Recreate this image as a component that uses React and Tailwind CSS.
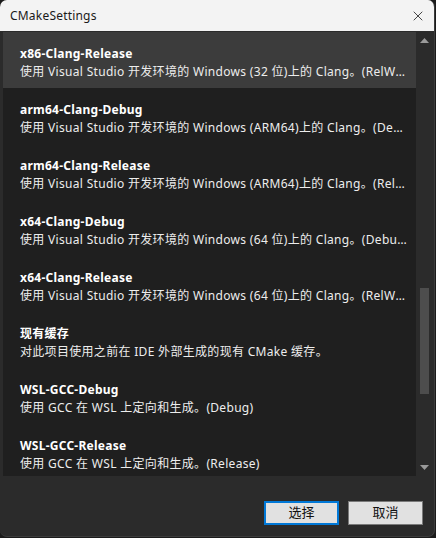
import { X } from "lucide-react";

const configs = [
  {
    name: "x86-Clang-Release",
    desc: "使用 Visual Studio 开发环境的 Windows (32 位)上的 Clang。(RelWithDebInfo)",
  },
  {
    name: "arm64-Clang-Debug",
    desc: "使用 Visual Studio 开发环境的 Windows (ARM64)上的 Clang。(Debug)",
  },
  {
    name: "arm64-Clang-Release",
    desc: "使用 Visual Studio 开发环境的 Windows (ARM64)上的 Clang。(RelWithDebInfo)",
  },
  {
    name: "x64-Clang-Debug",
    desc: "使用 Visual Studio 开发环境的 Windows (64 位)上的 Clang。(Debug)",
  },
  {
    name: "x64-Clang-Release",
    desc: "使用 Visual Studio 开发环境的 Windows (64 位)上的 Clang。(RelWithDebInfo)",
  },
  {
    name: "现有缓存",
    desc: "对此项目使用之前在 IDE 外部生成的现有 CMake 缓存。",
  },
  { name: "WSL-GCC-Debug", desc: "使用 GCC 在 WSL 上定向和生成。(Debug)" },
  { name: "WSL-GCC-Release", desc: "使用 GCC 在 WSL 上定向和生成。(Release)" },
];

const font = {
  fontFamily: '"Noto Sans", "Noto Sans CJK SC", sans-serif',
};

export default function App() {
  return (
    <div
      className="h-[538px] w-[436px] overflow-hidden bg-[#1b1b1b]"
      style={font}
    >
      <div className="flex h-[537px] w-[435px] flex-col overflow-hidden rounded-[7px] border-r border-b border-[#3c3c3c] bg-[#2b2b2b]">
        {/* title bar */}
        <div className="flex h-[31px] shrink-0 items-center justify-between bg-[#f3f3f3] pl-[10px] pr-[8px]">
          <span className="text-[12px] tracking-[0.2px] text-[#1a1a1a]">
            CMakeSettings
          </span>
          <X size={16} strokeWidth={1.2} className="text-[#1a1a1a]" />
        </div>

        {/* list + scrollbar */}
        <div className="ml-[3px] mr-[1px] mt-[1px] flex h-[444px] shrink-0">
          <div className="flex-1 overflow-hidden bg-[#1f1f1f]">
            {configs.map((c, i) => (
              <div
                key={c.name}
                className={`flex h-[56px] flex-col justify-end pb-[7px] pl-[17px] pr-[9px] ${
                  i === 0 ? "bg-[#3c3c3c]" : ""
                }`}
              >
                <div className="text-[12px] font-bold leading-[18px] tracking-[0.25px] text-white">
                  {c.name}
                </div>
                <div className="truncate text-[12px] leading-[18px] tracking-[0.31px] text-[#ededed]">
                  {c.desc}
                </div>
              </div>
            ))}
          </div>
          <div className="flex w-[17px] flex-col items-center bg-[#2b2b2b]">
            <div className="flex h-[17px] w-full items-center justify-center">
              <svg width="9" height="5" viewBox="0 0 9 5">
                <path d="M0 5 L4.5 0 L9 5 Z" fill="#9a9a9a" />
              </svg>
            </div>
            <div className="flex-1 w-full px-[4px]">
              <div className="mt-[239px] h-[106px] w-full bg-[#4d4d4d]" />
            </div>
            <div className="flex h-[17px] w-full items-center justify-center">
              <svg width="9" height="5" viewBox="0 0 9 5">
                <path d="M0 0 L4.5 5 L9 0 Z" fill="#9a9a9a" />
              </svg>
            </div>
          </div>
        </div>

        {/* footer */}
        <div className="flex flex-1 items-end justify-end gap-[9px] pb-[11px] pr-[11px]">
          <button
            type="button"
            className="h-[24px] w-[75px] border-2 border-[#0078d7] bg-[#e1e1e1] text-[13px] text-[#111]"
          >
            选择
          </button>
          <button
            type="button"
            className="h-[24px] w-[75px] border border-[#7a7a7a] bg-[#e1e1e1] text-[13px] text-[#111]"
          >
            取消
          </button>
        </div>
      </div>
    </div>
  );
}
